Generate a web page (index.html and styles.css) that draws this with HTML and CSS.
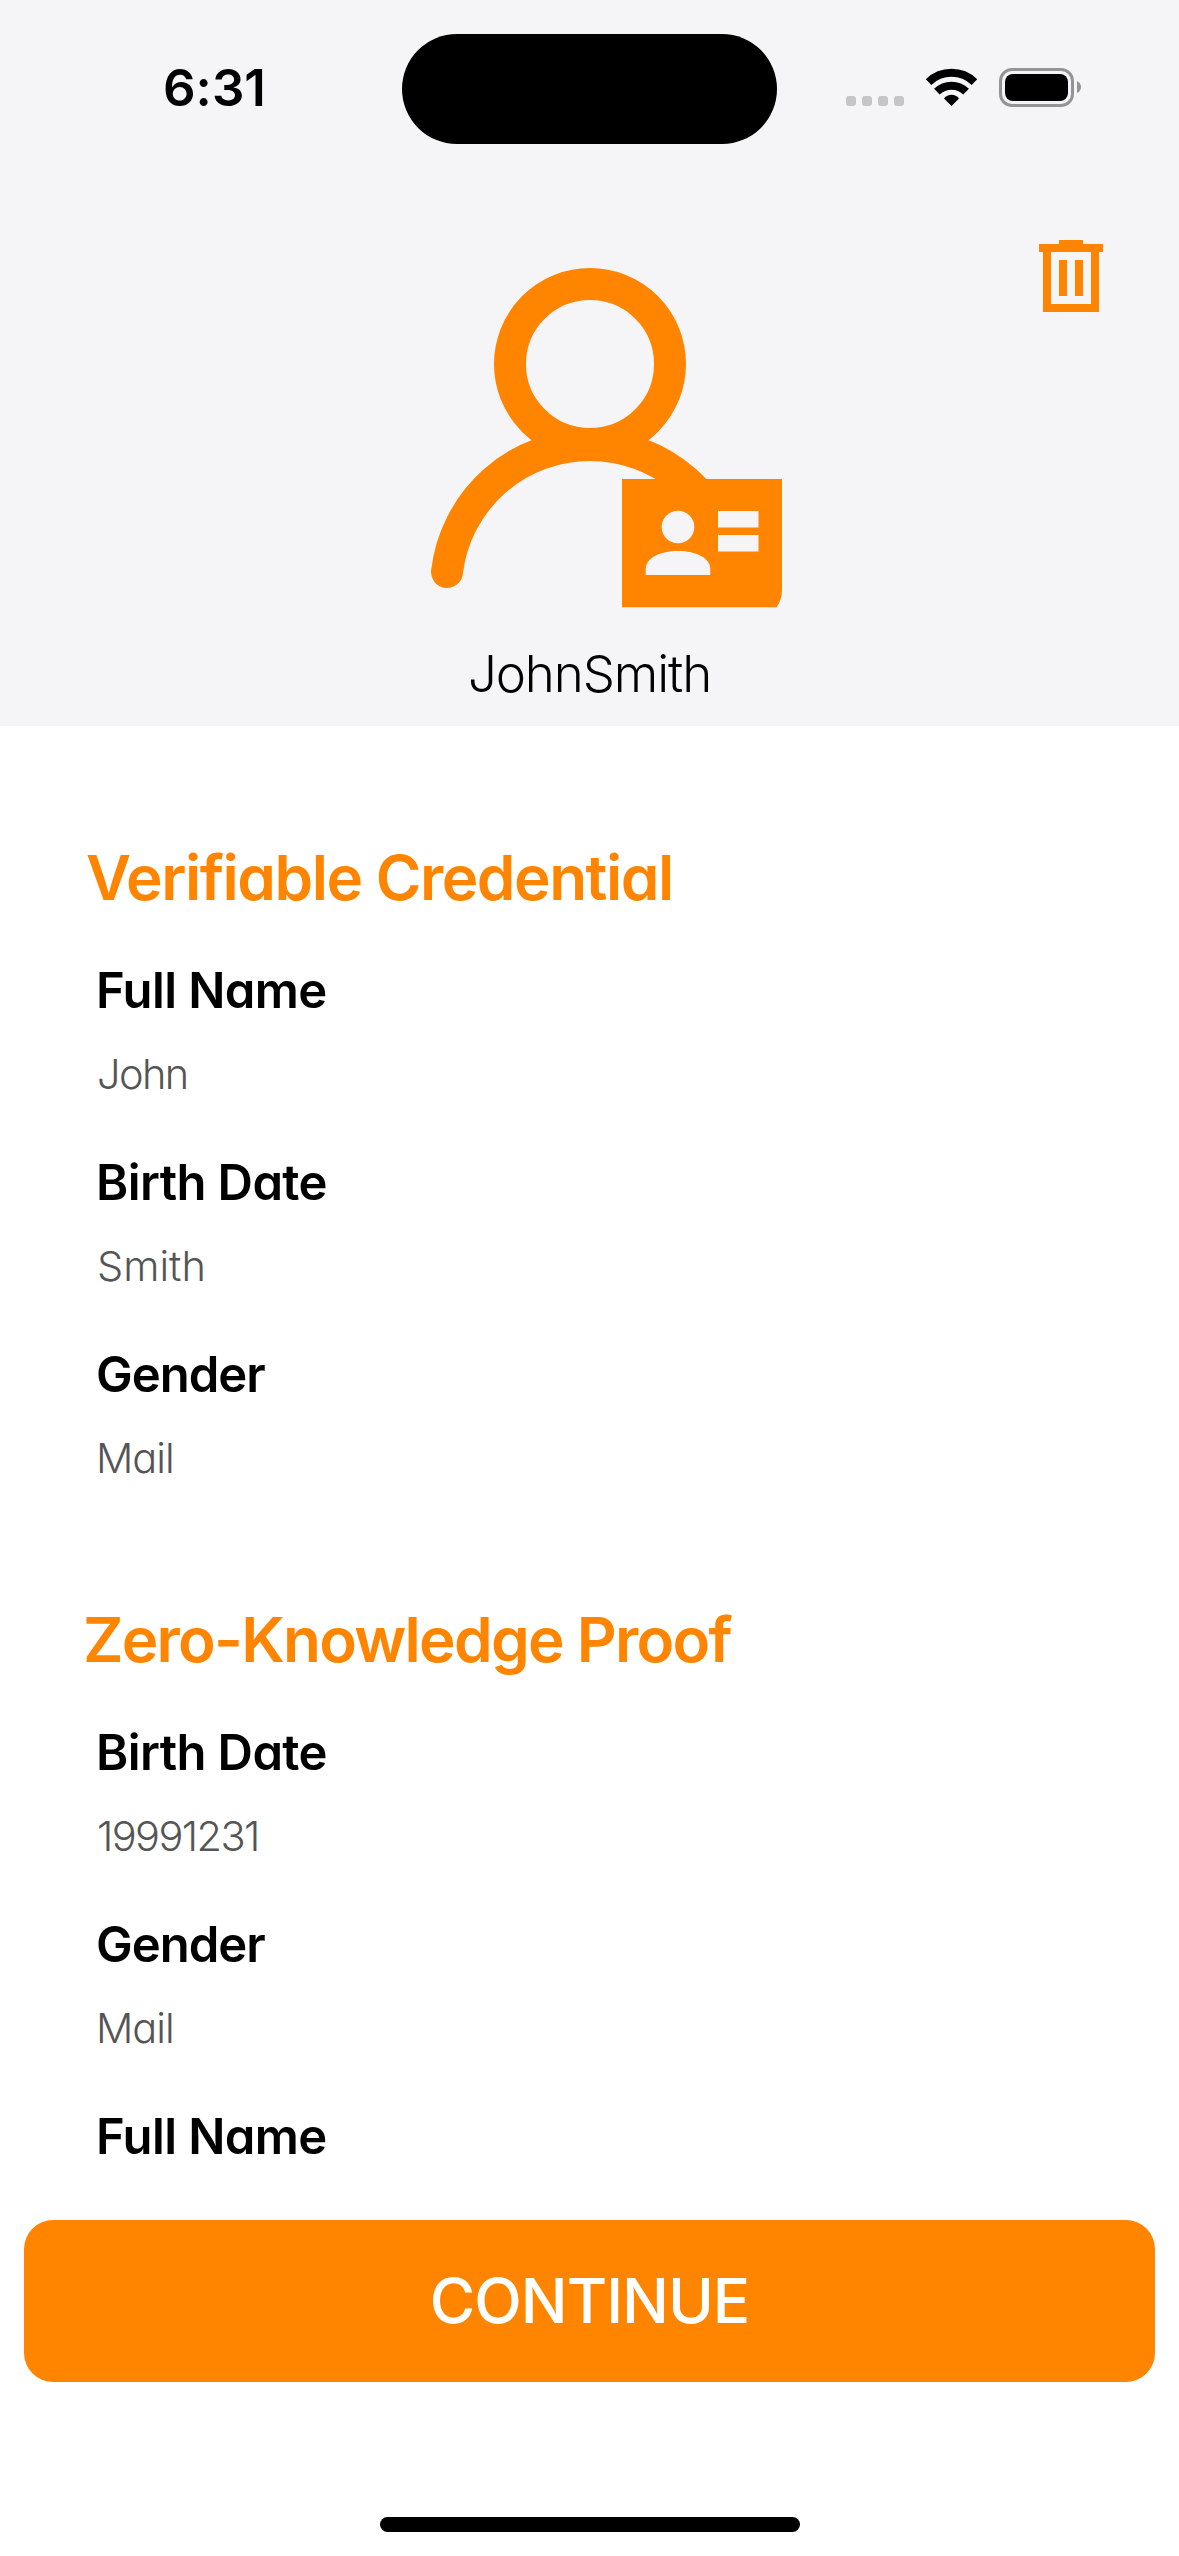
FILE: index.html
```html
<!DOCTYPE html>
<html lang="en">
<head>
<meta charset="utf-8">
<title>Credential details</title>
<link rel="stylesheet" href="styles.css">
</head>
<body>
<div class="screen">
  <header class="profile">
    <div class="status">
      <span class="time">6:31</span>
      <span class="island"></span>
      <svg class="indicators" width="236" height="40" viewBox="0 0 236 40">
        <g fill="#c5c5c7">
          <rect x="0" y="28" width="10" height="10" rx="3"/>
          <rect x="16" y="28" width="10" height="10" rx="3"/>
          <rect x="32" y="28" width="10" height="10" rx="3"/>
          <rect x="48" y="28" width="10" height="10" rx="3"/>
        </g>
        <g fill="none" stroke="#000" stroke-width="8">
          <path d="M82.6 14.1A33 33 0 0 1 128.4 14.1"/>
          <path d="M90.9 23.7A20.7 20.7 0 0 1 120.1 23.7"/>
        </g>
        <path d="M105.5 38L98 30.4Q101 26.8 105.5 26.8T113 30.4Z"/>
        <rect x="154.500" y="1.500" width="72" height="36" rx="11.500" fill="none" stroke="#949496" stroke-width="3"/>
        <rect x="159" y="6" width="63" height="27" rx="8"/>
        <path d="M231 13Q235 15 235 19T231 25Z" fill="#949496"/>
      </svg>
    </div>
    <svg class="trash" width="64" height="72" viewBox="0 0 64 72" fill="#ff8500">
      <path d="M20 0H44V4H64V12H60V72H4V12H0V4H20ZM12 12V64H52V12ZM20 20H28V56H20ZM36 20H44V56H36Z" fill-rule="evenodd"/>
    </svg>
    <svg class="avatar" width="351" height="340" viewBox="431 268 351 340">
      <g fill="none" stroke="#ff8500" stroke-width="32" stroke-linecap="round">
        <circle cx="590" cy="364" r="80"/>
        <path d="M447 572A144 144 0 0 1 733 572"/>
      </g>
      <path d="M622 479H782V590Q782 600 776.500 607.200H622Z" fill="#ff8500"/>
      <g fill="#f5f5f8">
        <circle cx="678" cy="527" r="16.300"/>
        <path d="M645.700 575V569C645.700 558 660 551 678 551S710.300 558 710.300 569V575Z"/>
        <rect x="718" y="511" width="40.500" height="16.500"/>
        <rect x="718" y="535" width="40.500" height="16.500"/>
      </g>
    </svg>
    <h1 class="person">JohnSmith</h1>
  </header>

  <main class="details">
    <section class="group">
      <h2 class="heading heading-credential">Verifiable Credential</h2>
      <dl class="fields">
        <div class="field"><dt>Full Name</dt><dd class="tight">John</dd></div>
        <div class="field"><dt>Birth Date</dt><dd>Smith</dd></div>
        <div class="field"><dt class="compact">Gender</dt><dd class="snug">Mail</dd></div>
      </dl>
    </section>
    <section class="group">
      <h2 class="heading heading-proof">Zero-Knowledge Proof</h2>
      <dl class="fields">
        <div class="field"><dt>Birth Date</dt><dd class="tight">19991231</dd></div>
        <div class="field"><dt class="compact">Gender</dt><dd class="snug">Mail</dd></div>
        <div class="field"><dt>Full Name</dt></div>
      </dl>
    </section>
  </main>

  <footer class="actions">
    <button class="continue">CONTINUE</button>
    <span class="home"></span>
  </footer>
</div>
</body>
</html>
```
FILE: styles.css
```css
* {
  box-sizing: border-box;
}

body {
  margin: 0;
  background: #fff;
  color: #000;
  font-family: Inter, "Liberation Sans", sans-serif;
  font-feature-settings: "cv11", "calt" 0;
}

h1, h2, dl, dd {
  margin: 0;
}

.screen {
  display: flex;
  flex-direction: column;
  width: 1179px;
  height: 2556px;
  overflow: hidden;
}

.profile {
  display: flex;
  flex-direction: column;
  align-items: center;
  height: 726px;
  background: #f5f5f8;
}

.status {
  display: grid;
  grid-template-columns: 402px 375px 402px;
  align-items: start;
  width: 100%;
  height: 240px;
  padding-top: 34px;
}

.time {
  padding: 24px 0 0 163px;
  font-size: 51px;
  font-weight: 600;
  line-height: 60px;
}

.island {
  height: 110px;
  border-radius: 55px;
  background: #000;
}

.indicators {
  margin: 34px 0 0 69px;
}

.trash {
  align-self: flex-end;
  margin-right: 76px;
}

.avatar {
  margin: -44px 0 0 34px;
}

.person {
  margin-top: 36px;
  font-size: 51px;
  font-weight: 300;
  letter-spacing: -1.1px;
  line-height: 60px;
}

.details {
  display: flex;
  flex-direction: column;
  gap: 111px;
  height: 1494px;
  padding: 112px 84px 0;
  overflow: hidden;
}

.heading {
  color: #ff8500;
  font-size: 62px;
  font-weight: 600;
  line-height: 80px;
}

.heading-credential {
  padding-left: 2px;
  letter-spacing: -1.5px;
}

.heading-proof {
  margin-left: -1px;
  letter-spacing: -1.75px;
}

.fields {
  display: flex;
  flex-direction: column;
  gap: 49px;
  padding: 43px 0 0 12px;
}

.group:first-child .fields {
  padding-bottom: 0;
}

.field {
  display: flex;
  flex-direction: column;
  gap: 23px;
}

.group:first-child {
  padding-bottom: 1px;
}

dt {
  font-size: 49px;
  font-weight: 600;
  letter-spacing: -0.6px;
  line-height: 60px;
}

.compact {
  letter-spacing: -1px;
}

dd {
  padding-left: 1px;
  color: #555;
  font-size: 41.5px;
  font-weight: 300;
  letter-spacing: 0;
  line-height: 60px;
}

.snug {
  padding-left: 0;
  letter-spacing: -1px;
}

.tight {
  letter-spacing: -1.6px;
}

.actions {
  display: flex;
  flex-direction: column;
  align-items: center;
  gap: 135px;
  padding: 0 24px;
}

.continue {
  width: 100%;
  height: 162px;
  padding: 0;
  border: 0;
  border-radius: 29px;
  background: #ff8500;
  color: #fff;
  font: 500 62px/80px Inter, "Liberation Sans", sans-serif;
  letter-spacing: -1px;
}

.home {
  width: 420px;
  height: 15px;
  border-radius: 8px;
  background: #000;
}
```
